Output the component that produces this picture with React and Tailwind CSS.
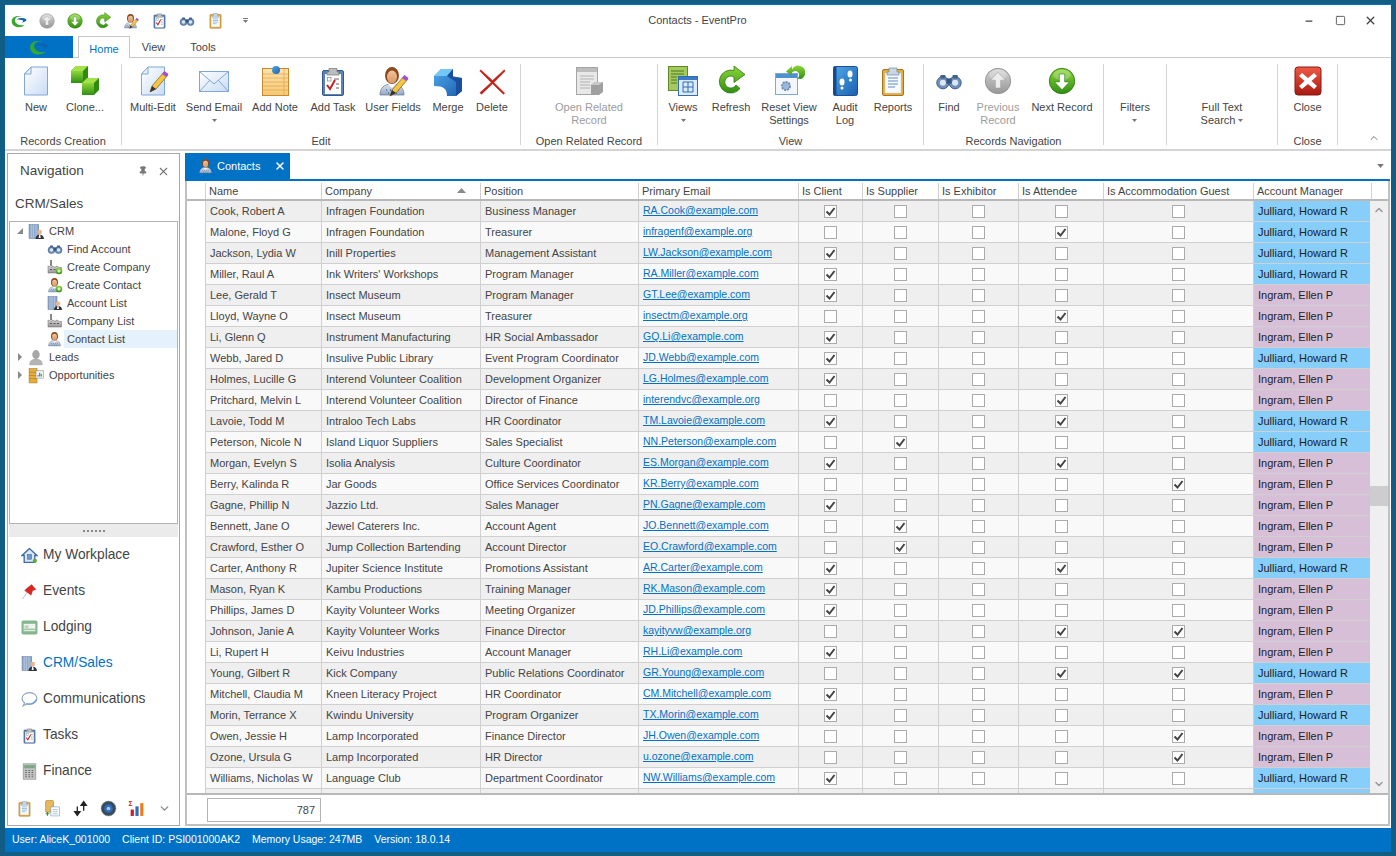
import React from 'react';
import { ChevronDown, ChevronUp, Pin, X, Minus, Square } from 'lucide-react';

const FONT = 'font-["Liberation_Sans",sans-serif]';

// name, company, position, email, flags (C S E A G), manager J/I
const contacts = [
  ['Cook, Robert A', 'Infragen Foundation', 'Business Manager', 'RA.Cook@example.com', 'C', 'J'],
  ['Malone, Floyd G', 'Infragen Foundation', 'Treasurer', 'infragenf@example.org', 'A', 'J'],
  ['Jackson, Lydia W', 'Inill Properties', 'Management Assistant', 'LW.Jackson@example.com', 'C', 'J'],
  ['Miller, Raul A', 'Ink Writers\' Workshops', 'Program Manager', 'RA.Miller@example.com', 'C', 'J'],
  ['Lee, Gerald T', 'Insect Museum', 'Program Manager', 'GT.Lee@example.com', 'C', 'I'],
  ['Lloyd, Wayne O', 'Insect Museum', 'Treasurer', 'insectm@example.org', 'A', 'I'],
  ['Li, Glenn Q', 'Instrument Manufacturing', 'HR Social Ambassador', 'GQ.Li@example.com', 'C', 'I'],
  ['Webb, Jared D', 'Insulive Public Library', 'Event Program Coordinator', 'JD.Webb@example.com', 'C', 'J'],
  ['Holmes, Lucille G', 'Interend Volunteer Coalition', 'Development Organizer', 'LG.Holmes@example.com', 'C', 'I'],
  ['Pritchard, Melvin L', 'Interend Volunteer Coalition', 'Director of Finance', 'interendvc@example.org', 'A', 'I'],
  ['Lavoie, Todd M', 'Intraloo Tech Labs', 'HR Coordinator', 'TM.Lavoie@example.com', 'CA', 'J'],
  ['Peterson, Nicole N', 'Island Liquor Suppliers', 'Sales Specialist', 'NN.Peterson@example.com', 'S', 'J'],
  ['Morgan, Evelyn S', 'Isolia Analysis', 'Culture Coordinator', 'ES.Morgan@example.com', 'CA', 'I'],
  ['Berry, Kalinda R', 'Jar Goods', 'Office Services Coordinator', 'KR.Berry@example.com', 'G', 'I'],
  ['Gagne, Phillip N', 'Jazzio Ltd.', 'Sales Manager', 'PN.Gagne@example.com', 'C', 'I'],
  ['Bennett, Jane O', 'Jewel Caterers Inc.', 'Account Agent', 'JO.Bennett@example.com', 'S', 'I'],
  ['Crawford, Esther O', 'Jump Collection Bartending', 'Account Director', 'EO.Crawford@example.com', 'S', 'I'],
  ['Carter, Anthony R', 'Jupiter Science Institute', 'Promotions Assistant', 'AR.Carter@example.com', 'CA', 'J'],
  ['Mason, Ryan K', 'Kambu Productions', 'Training Manager', 'RK.Mason@example.com', 'C', 'I'],
  ['Phillips, James D', 'Kayity Volunteer Works', 'Meeting Organizer', 'JD.Phillips@example.com', 'C', 'I'],
  ['Johnson, Janie A', 'Kayity Volunteer Works', 'Finance Director', 'kayityvw@example.org', 'AG', 'I'],
  ['Li, Rupert H', 'Keivu Industries', 'Account Manager', 'RH.Li@example.com', 'C', 'I'],
  ['Young, Gilbert R', 'Kick Company', 'Public Relations Coordinator', 'GR.Young@example.com', 'AG', 'J'],
  ['Mitchell, Claudia M', 'Kneen Literacy Project', 'HR Coordinator', 'CM.Mitchell@example.com', 'C', 'I'],
  ['Morin, Terrance X', 'Kwindu University', 'Program Organizer', 'TX.Morin@example.com', 'C', 'J'],
  ['Owen, Jessie H', 'Lamp Incorporated', 'Finance Director', 'JH.Owen@example.com', 'G', 'I'],
  ['Ozone, Ursula G', 'Lamp Incorporated', 'HR Director', 'u.ozone@example.com', 'G', 'I'],
  ['Williams, Nicholas W', 'Language Club', 'Department Coordinator', 'NW.Williams@example.com', 'C', 'J'],
  ['', '', '', '', '', 'J'],
];

/* ---------- icons ---------- */

const Svg = ({ size = 32, children }) => (
  <svg width={size} height={size} viewBox="0 0 32 32" className="shrink-0">{children}</svg>
);

const Defs = () => (
  <svg width="0" height="0" className="h-0 w-0 shrink-0">
    <defs>
      <linearGradient id="gPage" x1="0" y1="0" x2="1" y2="1"><stop offset="0" stopColor="#ffffff" /><stop offset="1" stopColor="#c9dcf4" /></linearGradient>
      <linearGradient id="gGreen" x1="0" y1="0" x2="0" y2="1"><stop offset="0" stopColor="#8ed63a" /><stop offset="1" stopColor="#2f8f12" /></linearGradient>
      <linearGradient id="gGray" x1="0" y1="0" x2="0" y2="1"><stop offset="0" stopColor="#d4d4d4" /><stop offset="1" stopColor="#979797" /></linearGradient>
      <linearGradient id="gBlue" x1="0" y1="0" x2="1" y2="1"><stop offset="0" stopColor="#4fa8ea" /><stop offset="1" stopColor="#1c5fb0" /></linearGradient>
      <linearGradient id="gRed" x1="0" y1="0" x2="0" y2="1"><stop offset="0" stopColor="#ee5a45" /><stop offset="1" stopColor="#a81a10" /></linearGradient>
      <linearGradient id="gNote" x1="0" y1="0" x2="0" y2="1"><stop offset="0" stopColor="#fce3ae" /><stop offset="1" stopColor="#f5c877" /></linearGradient>
      <linearGradient id="gSkin" x1="0" y1="0" x2="0" y2="1"><stop offset="0" stopColor="#f3c59b" /><stop offset="1" stopColor="#d89668" /></linearGradient>
      <linearGradient id="gShirt" x1="0" y1="0" x2="0" y2="1"><stop offset="0" stopColor="#dfe6f0" /><stop offset="1" stopColor="#93a6c2" /></linearGradient>
    </defs>
  </svg>
);

const Sheet = () => (
  <>
    <path d="M11 2h16.5v28H4.5V9z" fill="url(#gPage)" stroke="#7fa8d8" />
    <path d="M11 2v7H4.5z" fill="#e6effa" stroke="#7fa8d8" />
  </>
);

const Pencil = ({ dx = 0, dy = 0 }) => (
  <g transform={`translate(${dx} ${dy})`}>
    <path d="M12 28l2-6L26 8l4 3-12 14z" fill="#f5c542" stroke="#7a5a1c" strokeWidth=".7" />
    <path d="M24 10l2.5-3 4 3-2.5 3z" fill="#a84fd0" />
    <path d="M12 28l2-6 4 3z" fill="#333" />
  </g>
);

const Cube = ({ x, y }) => (
  <g transform={`translate(${x} ${y})`}>
    <path d="M0 5l5-5h12v12l-5 5H0z" fill="#2f8a10" />
    <path d="M0 5l5-5h12l-5 5z" fill="#a4e24a" />
    <path d="M0 5h12v12H0z" fill="url(#gGreen)" />
  </g>
);

const NewIcon = () => <Svg><Sheet /></Svg>;
const CloneIcon = () => <Svg><Cube x={2} y={1} /><Cube x={13} y={13} /></Svg>;
const MultiEditIcon = () => <Svg><Sheet /><Pencil dx={1} dy={-1} /></Svg>;

const MailIcon = () => (
  <Svg>
    <rect x="1.5" y="6.5" width="29" height="20" fill="url(#gPage)" stroke="#7fa8d8" />
    <path d="M2 7l14 12L30 7M2 26l10-11M30 26L20 15" fill="none" stroke="#7fa8d8" />
  </Svg>
);

const NoteIcon = () => (
  <Svg>
    <rect x="3.5" y="3.5" width="26" height="27" fill="url(#gNote)" stroke="#c98a2e" />
    <path d="M4 9h25M4 13h25M4 17h25M4 21h25M4 25h25" stroke="#e3a94f" strokeWidth=".8" />
    <path d="M25 4v26" stroke="#e3a94f" strokeWidth=".8" />
    <circle cx="17" cy="5" r="4" fill="url(#gBlue)" />
  </Svg>
);

const Clipboard = ({ size = 32 }) => (
  <Svg size={size}>
    <rect x="5.5" y="5.5" width="21" height="25" rx="1.5" fill="#5b84b8" stroke="#34598a" />
    <rect x="8" y="9" width="16" height="20" fill="#fdfdfd" />
    <path d="M12 7V3.500h8V7h2v3H10V7z" fill="#bdbdbd" stroke="#777" strokeWidth=".7" />
    <path d="M10 20l3 4 5-9" fill="none" stroke="#c81f1f" strokeWidth="2" />
    <path d="M17 14h5M19 19h3M19 23h3" stroke="#666" />
    <rect x="10.5" y="12.5" width="3.5" height="3.5" fill="none" stroke="#888" strokeWidth=".7" />
  </Svg>
);

const Person = ({ size = 32, pencil, hair = '#8a4a1e', plus, gray }) => (
  <Svg size={size}>
    <path d="M3 30c0-7 4-11 12-11s12 4 12 11z" fill={gray ? '#b4b4b4' : 'url(#gShirt)'} stroke={gray ? '#a0a0a0' : '#5d7290'} strokeWidth=".7" />
    {!gray && <path d="M11 19l4 4 4-4z" fill="#fff" />}
    {!gray && <path d="M9 25h1M13 25h1M17 25h1M21 25h1M11 28h1M15 28h1M19 28h1" stroke="#4a6a9a" strokeWidth="1.5" />}
    <ellipse cx="15" cy="10.5" rx="7" ry="8.5" fill={gray ? '#a8a8a8' : hair} />
    {!gray && <ellipse cx="15" cy="12" rx="5" ry="6.500" fill="url(#gSkin)" />}
    {pencil && <Pencil dx={1} dy={3} />}
    {plus && (
      <g>
        <circle cx="24" cy="24" r="6.5" fill="url(#gGreen)" />
        <path d="M24 20.500v7M20.500 24h7" stroke="#fff" strokeWidth="2" />
      </g>
    )}
  </Svg>
);

const MergeIcon = () => (
  <Svg>
    <path d="M2 11l7-7h12l-1 7 10 2v13l-6 5h-9c0-7-3-10-13-10z" fill="url(#gBlue)" />
    <path d="M2 11l7-7h12l-6 7z" fill="#74c6f4" />
    <path d="M21 4v8l9 1v13l-6 5V17l-9-6z" fill="#1b4f9e" />
  </Svg>
);

const DeleteIcon = () => (
  <Svg size={29}>
    <path d="M3 3l13 12L29 3l1 1.500-12.500 12.500L29.500 29 28 30 16 18.500 4 30l-2-1.500L14.500 17 2 4.500z" fill="#c8231a" stroke="#a81a10" strokeWidth=".5" />
  </Svg>
);

const OpenRelatedIcon = () => (
  <Svg>
    <rect x="3.5" y="2.5" width="21" height="27" fill="#e8e8e8" stroke="#a5a5a5" />
    <rect x="4" y="3" width="20" height="4" fill="#bcbcbc" />
    <path d="M7 11h14M7 14h14M7 17h10M7 20h10M7 23h10" stroke="#b2b2b2" />
    <path d="M18 20l4-3h8v10l-4 3h-8z" fill="#a0a0a0" />
    <path d="M18 20l4-3h8l-4 3z" fill="#c8c8c8" />
  </Svg>
);

const ViewsIcon = () => (
  <Svg>
    <rect x="1.5" y="1.5" width="19" height="24" fill="#a4c95e" stroke="#5f8a25" />
    <path d="M4 6h13M4 9h13M4 12h6M4 15h6M4 18h6" stroke="#4d7a1a" />
    <rect x="11.5" y="11.5" width="19" height="19" fill="#dceafa" stroke="#2f6cb4" />
    <rect x="12" y="12" width="18" height="3" fill="#3d7cc4" />
    <path d="M16 17h10v10H16zM21 17v10M16 22h10" fill="none" stroke="#2f6cb4" />
  </Svg>
);

const RefreshIcon = ({ size = 32 }) => (
  <Svg size={size}>
    <path d="M25 23.500A11.500 11.500 0 1 1 19 5.500V1l11 8.500-11 8v-5.500a6 6 0 1 0 2 8z" fill="url(#gGreen)" stroke="#2d7a10" strokeWidth=".8" />
  </Svg>
);

const ResetViewIcon = () => (
  <Svg>
    <rect x="2.5" y="8.5" width="22" height="21" fill="#f3f7fd" stroke="#7fa8d8" />
    <rect x="3" y="9" width="21" height="4" fill="#4f8fd4" />
    <circle cx="13" cy="21" r="4" fill="#9db8d8" stroke="#6f8fb4" strokeWidth="2" strokeDasharray="2 1" />
    <path d="M28 14A7 7 0 1 0 19 4.500V1l-6 5.500 6 4.500V7.500a4 4 0 1 1 5 6z" fill="url(#gGreen)" />
  </Svg>
);

const AuditIcon = () => (
  <Svg>
    <rect x="4.5" y="1.5" width="24" height="29" rx="2" fill="url(#gBlue)" stroke="#1d4f94" />
    <rect x="4.5" y="1.5" width="3" height="29" fill="#164a8e" />
    <ellipse cx="13" cy="17" rx="2.5" ry="3.500" fill="#fff" />
    <ellipse cx="13" cy="23" rx="1.5" ry="1.500" fill="#fff" />
    <ellipse cx="21" cy="9" rx="2.5" ry="3.500" fill="#fff" />
    <ellipse cx="21.500" cy="15" rx="1.500" ry="1.500" fill="#fff" />
  </Svg>
);

const ReportIcon = ({ size = 32 }) => (
  <Svg size={size}>
    <rect x="5.5" y="4.5" width="21" height="26" rx="1.5" fill="#e5ae3c" stroke="#a5761c" />
    <rect x="8" y="8" width="16" height="20" fill="#f7fbff" stroke="#c3d1e2" strokeWidth=".5" />
    <path d="M12 7V3h8v4h2v3H10V7z" fill="#c8d6e6" stroke="#70879e" strokeWidth=".7" />
    <path d="M11 13h10M11 16h10M11 19h10M11 22h7" stroke="#5d8fc4" />
  </Svg>
);

const Binoculars = ({ size = 32 }) => (
  <Svg size={size}>
    <circle cx="9" cy="18" r="7" fill="#6d8fb8" stroke="#35557e" />
    <circle cx="23" cy="18" r="7" fill="#6d8fb8" stroke="#35557e" />
    <circle cx="9" cy="18" r="3.500" fill="#dbe7f4" />
    <circle cx="23" cy="18" r="3.500" fill="#dbe7f4" />
    <rect x="13" y="13" width="6" height="6" fill="#35557e" />
    <rect x="6" y="9" width="6" height="4" rx="1" fill="#43618a" />
    <rect x="20" y="9" width="6" height="4" rx="1" fill="#43618a" />
  </Svg>
);

const CircleArrow = ({ size = 32, up, green }) => (
  <Svg size={size}>
    <circle cx="16" cy="16" r="14.5" fill={green ? 'url(#gGreen)' : 'url(#gGray)'} stroke={green ? '#2d7a10' : '#8e8e8e'} />
    <ellipse cx="16" cy="9" rx="10" ry="6" fill="#fff" opacity=".25" />
    <path
      d={up ? 'M16 6l8.500 9H19v9h-6v-9H7.500z' : 'M16 26l8.500-9H19V8h-6v9H7.500z'}
      fill={green ? '#fff' : '#ededed'}
      stroke={green ? '#1f6a0a' : '#9a9a9a'}
      strokeWidth=".6"
    />
  </Svg>
);

const CloseIcon = () => (
  <Svg>
    <rect x="3" y="2" width="26" height="28" rx="3" fill="url(#gRed)" stroke="#8a1810" />
    <path d="M10 8l6 5 6-5 3 3-5.500 5 5.500 5-3 3-6-5-6 5-3-3 5.500-5L7 11z" fill="#fff" />
  </Svg>
);

const Logo = ({ size = 32 }) => (
  <Svg size={size}>
    <path d="M3 17C3 8 13 6 21 8c-9-1-13 3-12 8 1 5 7 9 17 7-6 6-22 6-23-6z" fill="#35a92e" />
    <path d="M12 13c5-3 12-3 17 0 1 3-3 5-8 6 3-2 3-5-1-5-3 0-5 0-8-1z" fill="#0f62ae" />
  </Svg>
);

const Building = ({ size = 16 }) => (
  <Svg size={size}>
    <rect x="2" y="3" width="18" height="26" fill="#8fa9cc" stroke="#55729a" />
    <path d="M6 3v26M10 3v26M15 3v26" stroke="#d4e0ef" />
    <circle cx="22" cy="17" r="4.500" fill="#e8b88e" />
    <path d="M14 30c0-5 3-8 8-8s8 3 8 8z" fill="#333" />
    <path d="M21 22h2l1 6h-4z" fill="#fff" />
  </Svg>
);

const Factory = ({ size = 16, plus }) => (
  <Svg size={size}>
    <rect x="6" y="2" width="4" height="12" fill="#888" />
    <path d="M2 14l8 3v-3l8 3v-3l8 3h3v11H2z" fill="url(#gGray)" stroke="#666" />
    <path d="M6 21h4M13 21h4M20 21h4" stroke="#555" strokeWidth="2" />
    {plus && (
      <g>
        <circle cx="24" cy="24" r="6.5" fill="url(#gGreen)" />
        <path d="M24 20.500v7M20.500 24h7" stroke="#fff" strokeWidth="2" />
      </g>
    )}
  </Svg>
);

const Coins = ({ size = 16 }) => (
  <Svg size={size}>
    <rect x="2" y="3" width="15" height="27" fill="#e5ae3c" stroke="#a5761c" />
    <path d="M2 10h15M2 16h15M2 22h15" stroke="#a5761c" />
    <rect x="15" y="7" width="14" height="14" fill="#f0f0f0" stroke="#8a8a8a" />
    <path d="M19 18v-3M22 18v-7M25 18v-5" stroke="#5d7290" strokeWidth="2" />
  </Svg>
);

const HouseIcon = () => (
  <Svg size={17}>
    <path d="M16 3L2 16h4v13h20V16h4z" fill="#dbe7f6" stroke="#3f6aa5" strokeWidth="2.5" />
    <rect x="12" y="14" width="8" height="9" fill="#6f98ca" stroke="#3f6aa5" />
    <circle cx="26" cy="26" r="4" fill="#58b030" />
  </Svg>
);

const PinIcon = () => (
  <Svg size={17}>
    <path d="M3 30l9-13" stroke="#c8c8c8" strokeWidth="2" />
    <path d="M11 10l9-7 8 9-6 2-3 9-12-9z" fill="#dc2626" stroke="#a31515" strokeWidth=".7" />
  </Svg>
);

const LodgingIcon = () => (
  <Svg size={17}>
    <rect x="1" y="3" width="30" height="26" rx="3" fill="#83b58f" />
    <rect x="5" y="9" width="22" height="14" fill="#eef4ee" />
    <path d="M7 12h7v5H7z" fill="#b7d2bc" />
    <path d="M5 18h22v3H5z" fill="#a3c6aa" />
  </Svg>
);

const BubbleIcon = () => (
  <Svg size={17}>
    <path d="M16 3c8 0 14 5 14 11s-6 11-14 11c-2 0-3 0-5-1l-7 4 3-6C3 20 2 17 2 14 2 8 8 3 16 3z" fill="#fff" stroke="#8fa3b8" strokeWidth="2" />
    <path d="M9 24c8 2 17-1 20-8" fill="none" stroke="#5d9bd5" strokeWidth="2" />
  </Svg>
);

const CalcIcon = () => (
  <Svg size={17}>
    <rect x="4" y="1.5" width="24" height="29" fill="#c4c4c4" stroke="#7f7f7f" />
    <rect x="6" y="4" width="20" height="6" fill="#7aa882" />
    <path d="M8 14h3M14 14h3M20 14h3M8 18h3M14 18h3M20 18h3M8 22h3M14 22h3M20 22h3M8 26h3M14 26h3M20 26h3" stroke="#666" strokeWidth="2" />
  </Svg>
);

const CopyDocs = () => (
  <Svg size={17}>
    <rect x="3" y="1" width="15" height="22" rx="2" fill="#e5b85c" stroke="#a5761c" />
    <rect x="13" y="13" width="16" height="17" fill="#fff" stroke="#5d8fc4" />
    <path d="M16 18h10M16 22h10M16 26h10" stroke="#5d8fc4" />
    <path d="M3 26h7M6.500 22.500v7" stroke="#2f9a12" strokeWidth="2" />
  </Svg>
);

const SortArrows = () => (
  <Svg size={17}>
    <path d="M10 12v16M5 22l5 7 5-7z" stroke="#222" strokeWidth="2.5" fill="#222" />
    <path d="M22 20V4M17 10l5-7 5 7z" stroke="#222" strokeWidth="2.5" fill="#222" />
  </Svg>
);

const GlobeBtn = () => (
  <Svg size={17}>
    <circle cx="16" cy="16" r="14" fill="#3c4a58" stroke="#8a98a8" />
    <circle cx="16" cy="16" r="8" fill="#2d6cc0" />
    <circle cx="16" cy="16" r="3.5" fill="#a8c6ea" />
  </Svg>
);

const SigmaChart = () => (
  <Svg size={17}>
    <text x="1" y="12" fontSize="13" fontWeight="700" fill="#c81f1f" fontFamily="Liberation Sans">Σ</text>
    <rect x="5" y="18" width="6" height="12" fill="#c81f1f" />
    <rect x="14" y="12" width="6" height="18" fill="#2d6cc0" />
    <rect x="23" y="6" width="6" height="24" fill="#ef7d16" />
  </Svg>
);

const Caret = ({ className = '' }) => (
  <svg width="5" height="3" viewBox="0 0 5 3" className={className}><path d="M0 0h5L2.500 3z" fill="#777" /></svg>
);

const ArrowOpen = () => (
  <svg width="6" height="6" viewBox="0 0 6 6" className="ml-[7px]"><path d="M6 0v6H0z" fill="#888" /></svg>
);

const ArrowClosed = () => (
  <svg width="4" height="8" viewBox="0 0 4 8" className="ml-[8px]"><path d="M0 0l4 4-4 4z" fill="#888" /></svg>
);

/* ---------- ribbon ---------- */

const RibbonButton = ({ icon, label, width, disabled, caret }) => (
  <div className={`flex flex-col items-center ${width} ${disabled ? 'text-[#9c9c9c]' : 'text-[#444]'}`}>
    <div className="flex h-[34px] items-center justify-center">{icon}</div>
    <div className="mt-[3px] text-center text-[11px] leading-[13px] whitespace-pre">{label}</div>
    {caret && <Caret className="mt-[5px]" />}
  </div>
);

const RibbonGroup = ({ label, width, pad = 'pl-0', children }) => (
  <div className={`flex h-[81px] shrink-0 flex-col border-r border-[#d4d4d4] ${width}`}>
    <div className={`flex flex-1 ${pad}`}>{children}</div>
    <div className="h-[10px] text-center text-[11px] leading-[13px] text-[#444]">{label}</div>
  </div>
);

const Ribbon = () => (
  <div className="flex h-[93px] shrink-0 items-start border-b-2 border-[#d4d4d4] pt-[6px]">
    <RibbonGroup label="Records Creation" width="w-[117px]" pad="pl-[8px]">
      <RibbonButton width="w-[46px]" icon={<NewIcon />} label="New" />
      <RibbonButton width="w-[52px]" icon={<CloneIcon />} label="Clone..." />
    </RibbonGroup>
    <RibbonGroup label="Edit" width="w-[399px]" pad="pl-[5px]">
      <RibbonButton width="w-[52px]" icon={<MultiEditIcon />} label="Multi-Edit" />
      <RibbonButton width="w-[70px]" icon={<MailIcon />} label="Send Email" caret />
      <RibbonButton width="w-[52px]" icon={<NoteIcon />} label="Add Note" />
      <RibbonButton width="w-[64px]" icon={<Clipboard />} label="Add Task" />
      <RibbonButton width="w-[56px]" icon={<Person pencil />} label="User Fields" />
      <RibbonButton width="w-[54px]" icon={<MergeIcon />} label="Merge" />
      <RibbonButton width="w-[34px]" icon={<DeleteIcon />} label="Delete" />
    </RibbonGroup>
    <RibbonGroup label="Open Related Record" width="w-[137px]" pad="justify-center">
      <RibbonButton disabled width="w-[90px]" icon={<OpenRelatedIcon />} label={'Open Related\nRecord'} />
    </RibbonGroup>
    <RibbonGroup label="View" width="w-[266px]" pad="pl-[2px]">
      <RibbonButton width="w-[46px]" icon={<ViewsIcon />} label="Views" caret />
      <RibbonButton width="w-[50px]" icon={<RefreshIcon />} label="Refresh" />
      <RibbonButton width="w-[66px]" icon={<ResetViewIcon />} label={'Reset View\nSettings'} />
      <RibbonButton width="w-[46px]" icon={<AuditIcon />} label={'Audit\nLog'} />
      <RibbonButton width="w-[50px]" icon={<ReportIcon />} label="Reports" />
    </RibbonGroup>
    <RibbonGroup label="Records Navigation" width="w-[180px]" pad="pl-[2px]">
      <RibbonButton width="w-[46px]" icon={<Binoculars size={28} />} label="Find" />
      <RibbonButton disabled width="w-[52px]" icon={<CircleArrow up size={28} />} label={'Previous\nRecord'} />
      <RibbonButton width="w-[76px]" icon={<CircleArrow green size={28} />} label="Next Record" />
    </RibbonGroup>
    <RibbonGroup label="" width="w-[63px]" pad="justify-center">
      <div className="flex flex-col items-center pt-[37px] text-[11px] leading-[13px] text-[#444]">
        Filters
        <Caret className="mt-[5px]" />
      </div>
    </RibbonGroup>
    <RibbonGroup label="" width="w-[111px]" pad="justify-center">
      <div className="flex flex-col items-center pt-[37px] text-[11px] leading-[13px] text-[#444]">
        Full Text
        <div className="flex items-center gap-[3px]">Search<Caret /></div>
      </div>
    </RibbonGroup>
    <RibbonGroup label="Close" width="w-[60px]" pad="justify-center">
      <RibbonButton width="w-[50px]" icon={<CloseIcon />} label="Close" />
    </RibbonGroup>
    <div className="flex h-[80px] flex-1 items-end justify-end pr-[11px]">
      <ChevronUp size={12} strokeWidth={2} className="text-[#777]" />
    </div>
  </div>
);

const TitleBar = () => (
  <div className="flex h-[31px] shrink-0 items-center">
    <div className="flex w-[256px] shrink-0 items-center">
      <div className="flex w-[28px] justify-center"><Logo size={18} /></div>
      <div className="flex w-[28px] justify-center"><CircleArrow up size={16} /></div>
      <div className="flex w-[28px] justify-center"><CircleArrow green size={16} /></div>
      <div className="flex w-[28px] justify-center"><RefreshIcon size={18} /></div>
      <div className="flex w-[28px] justify-center"><Person size={16} pencil /></div>
      <div className="flex w-[28px] justify-center"><Clipboard size={17} /></div>
      <div className="flex w-[28px] justify-center"><Binoculars size={16} /></div>
      <div className="flex w-[28px] justify-center"><ReportIcon size={17} /></div>
      <div className="flex w-[32px] flex-col items-center gap-[1px]">
        <div className="h-px w-[5px] bg-[#777]" />
        <Caret />
      </div>
    </div>
    <div className="flex-1 pr-[160px] text-center text-[11px] text-[#444]">Contacts - EventPro</div>
    <div className="flex w-[97px] items-center text-[#444]">
      <div className="flex w-[30px] justify-center"><Minus size={10} strokeWidth={3} /></div>
      <div className="flex w-[32px] justify-center"><Square size={11} strokeWidth={1.8} /></div>
      <div className="flex w-[28px] justify-center"><X size={13} strokeWidth={2.5} /></div>
    </div>
  </div>
);

const TabStrip = () => (
  <div className="flex h-[22px] shrink-0 items-end border-b border-[#c8c8c8] text-[11px]">
    <div className="mb-[-1px] flex h-[22px] w-[68px] items-center justify-center bg-[#0072c6]">
      <Logo size={22} />
    </div>
    <div className="mb-[-1px] ml-[5px] flex h-[22px] w-[52px] items-center justify-center border border-b-0 border-[#c8c8c8] bg-white pt-[3px] text-[#0072c6]">Home</div>
    <div className="flex h-[22px] w-[47px] items-center justify-center pt-[3px] text-[#444]">View</div>
    <div className="flex h-[22px] w-[52px] items-center justify-center pt-[3px] text-[#444]">Tools</div>
  </div>
);

/* ---------- navigation ---------- */

const TreeRow = ({ icon, label, selected }) => (
  <div className="flex h-[18px] items-center pl-[36px]">
    <div className="flex w-[18px] shrink-0 justify-center">{icon}</div>
    <div className={`flex h-[18px] flex-1 items-center pl-[3px] ${selected ? 'bg-[#e5f1fb]' : ''}`}>{label}</div>
  </div>
);

const TreeRoot = ({ arrow, icon, label }) => (
  <div className="flex h-[18px] items-center">
    <div className="flex w-[18px] shrink-0 items-center">{arrow}</div>
    {icon}
    <span className="ml-[4px]">{label}</span>
  </div>
);

const NavItem = ({ icon, label, active }) => (
  <div className={`flex h-[36px] items-center pl-[12px] text-[13.75px] ${active ? 'text-[#0072c6]' : 'text-[#444]'}`}>
    <div className="flex w-[16px] justify-center">{icon}</div>
    <span className="ml-[6px]">{label}</span>
  </div>
);

const NavPanel = () => (
  <div className="flex h-full w-[173px] shrink-0 flex-col border border-[#a8a8a8] bg-white px-[1px]">
    <div className="flex h-[34px] shrink-0 items-center pr-[8px] pl-[11px] text-[13.5px] text-[#444]">
      <span className="flex-1">Navigation</span>
      <Pin size={10} className="mr-[9px] text-[#777]" fill="#777" />
      <X size={13} strokeWidth={2} className="text-[#777]" />
    </div>
    <div className="h-[33px] shrink-0 pt-[6px] pl-[6px] text-[13.5px] leading-[20px] text-[#444]">CRM/Sales</div>
    <div className="h-[303px] shrink-0 border border-[#b4b4b4] text-[11px] text-[#444]">
      <TreeRoot arrow={<ArrowOpen />} icon={<Building size={17} />} label="CRM" />
      <TreeRow icon={<Binoculars size={16} />} label="Find Account" />
      <TreeRow icon={<Factory plus />} label="Create Company" />
      <TreeRow icon={<Person size={16} plus />} label="Create Contact" />
      <TreeRow icon={<Building size={16} />} label="Account List" />
      <TreeRow icon={<Factory />} label="Company List" />
      <TreeRow icon={<Person size={16} />} label="Contact List" selected />
      <TreeRoot arrow={<ArrowClosed />} icon={<Person size={17} gray />} label="Leads" />
      <TreeRoot arrow={<ArrowClosed />} icon={<Coins size={17} />} label="Opportunities" />
    </div>
    <div className="flex h-[13px] shrink-0 items-center justify-center bg-[#ebebeb]">
      <div className="h-[2px] w-[22px] bg-[repeating-linear-gradient(90deg,#888_0,#888_2px,transparent_2px,transparent_4px)]" />
    </div>
    <div className="flex-1">
      <NavItem icon={<HouseIcon />} label="My Workplace" />
      <NavItem icon={<PinIcon />} label="Events" />
      <NavItem icon={<LodgingIcon />} label="Lodging" />
      <NavItem icon={<Building size={17} />} label="CRM/Sales" active />
      <NavItem icon={<BubbleIcon />} label="Communications" />
      <NavItem icon={<Clipboard size={17} />} label="Tasks" />
      <NavItem icon={<CalcIcon />} label="Finance" />
    </div>
    <div className="flex h-[34px] shrink-0 items-center pl-[2px]">
      <div className="flex w-[28px] justify-center"><ReportIcon size={17} /></div>
      <div className="flex w-[28px] justify-center"><CopyDocs /></div>
      <div className="flex w-[28px] justify-center"><SortArrows /></div>
      <div className="flex w-[28px] justify-center"><GlobeBtn /></div>
      <div className="flex w-[28px] justify-center"><SigmaChart /></div>
      <div className="flex w-[28px] justify-center"><ChevronDown size={13} strokeWidth={2.5} className="text-[#888]" /></div>
    </div>
  </div>
);

/* ---------- grid ---------- */

const columns = ['w-[116px]', 'w-[159px]', 'w-[158px]', 'w-[160px]', 'w-[64px]', 'w-[76px]', 'w-[80px]', 'w-[85px]', 'w-[150px]', 'w-[118px]'];
const headers = ['Name', 'Company', 'Position', 'Primary Email', 'Is Client', 'Is Supplier', 'Is Exhibitor', 'Is Attendee', 'Is Accommodation Guest', 'Account Manager'];

const CheckCell = ({ width, checked }) => (
  <div className={`flex h-full shrink-0 items-center justify-center border-r border-[#d0d0d0] ${width}`}>
    <div className="flex h-[13px] w-[13px] items-center justify-center border border-[#ababab] bg-white">
      {checked && (
        <svg width="11" height="11" viewBox="0 0 11 11"><path d="M1.5 5.500l3 3 5-6.500" fill="none" stroke="#444" strokeWidth="2" /></svg>
      )}
    </div>
  </div>
);

const TextCell = ({ width, children }) => (
  <div className={`flex h-full shrink-0 items-center overflow-hidden border-r border-[#d0d0d0] pl-[4px] whitespace-nowrap ${width}`}>{children}</div>
);

const GridRow = ({ row, idx }) => {
  const [name, company, position, email, flags, manager] = row;
  return (
    <div className={`flex h-[21px] shrink-0 border-b border-[#d0d0d0] ${idx % 2 === 0 ? 'bg-[#efefef]' : 'bg-[#f9f9f9]'}`}>
      <TextCell width={columns[0]}>{name}</TextCell>
      <TextCell width={columns[1]}>{company}</TextCell>
      <TextCell width={columns[2]}>{position}</TextCell>
      <TextCell width={columns[3]}><span className="text-[10.5px] text-[#0072c6] underline">{email}</span></TextCell>
      <CheckCell width={columns[4]} checked={flags.includes('C')} />
      <CheckCell width={columns[5]} checked={flags.includes('S')} />
      <CheckCell width={columns[6]} checked={flags.includes('E')} />
      <CheckCell width={columns[7]} checked={flags.includes('A')} />
      <CheckCell width={columns[8]} checked={flags.includes('G')} />
      <div className={`flex h-full w-[118px] shrink-0 items-center pl-[4px] text-[#222] ${manager === 'J' ? 'bg-[#87cefa]' : 'bg-[#d8bfd8]'}`}>
        {name && (manager === 'J' ? 'Julliard, Howard R' : 'Ingram, Ellen P')}
      </div>
    </div>
  );
};

const Grid = () => (
  <div className="flex min-h-0 flex-1 flex-col text-[11px] text-[#444]">
    <div className="flex h-[20px] shrink-0 border-b-2 border-[#b8b8b8] pt-[2px]">
      <div className="w-[19px] shrink-0 border-r border-[#d0d0d0]" />
      {headers.map((h, i) => (
        <div key={h} className={`relative flex h-full shrink-0 items-center border-r border-[#d0d0d0] pl-[3px] ${columns[i]}`}>
          {h}
          {h === 'Company' && <svg width="9" height="5" viewBox="0 0 9 5" className="absolute top-[5px] right-[14px]"><path d="M4.5 0L9 5H0z" fill="#8a8a8a" /></svg>}
        </div>
      ))}
      <div className="w-[18px] shrink-0" />
    </div>
    <div className="flex min-h-0 flex-1">
      <div className="w-[19px] shrink-0 border-r border-[#d0d0d0]" />
      <div className="min-h-0 flex-1 overflow-hidden">
        {contacts.map((row, idx) => <GridRow key={idx} row={row} idx={idx} />)}
      </div>
      <div className="flex w-[18px] shrink-0 flex-col items-center bg-[#efefef]">
        <ChevronUp size={12} strokeWidth={3} className="mt-[3px] text-[#999]" />
        <div className="flex-1" />
        <div className="h-[20px] w-full bg-[#cdcdcd]" />
        <div className="flex-[0_0_272px]" />
        <ChevronDown size={12} strokeWidth={3} className="mb-[3px] text-[#999]" />
      </div>
    </div>
    <div className="flex h-[31px] shrink-0 items-center border-t-2 border-[#b8b8b8] pl-[20px]">
      <div className="h-[24px] w-[114px] border border-[#b4b4b4] pr-[5px] text-right leading-[22px] text-[#444]">787</div>
    </div>
  </div>
);

const MainPanel = () => (
  <div className="flex h-full min-w-0 flex-1 flex-col">
    <div className="flex h-[28px] shrink-0 border-b-2 border-[#0072c6]">
      <div className="flex h-[26px] w-[105px] items-center bg-[#0072c6] pl-[13px] text-[11px] text-white">
        <Person size={16} />
        <span className="ml-[3px]">Contacts</span>
        <X size={12} strokeWidth={3} className="ml-[14px]" />
      </div>
      <div className="flex flex-1 items-center justify-end pr-[6px]"><Caret className="h-[4px] w-[7px]" /></div>
    </div>
    <div className="flex min-h-0 flex-1 flex-col border-2 border-t-0 border-[#c0c0c0]">
      <Grid />
    </div>
  </div>
);

export default function App() {
  return (
    <div className={`flex h-[856px] w-[1396px] flex-col overflow-hidden border-x-[5px] border-b-[4px] border-[#115d84] ${FONT}`}>
      <Defs />
      <div className="h-[5px] shrink-0 border-b border-[#0072c6] bg-[#115d84]" />
      <div className="flex min-h-0 flex-1 flex-col bg-white">
        <TitleBar />
        <TabStrip />
        <Ribbon />
        <div className="flex min-h-0 flex-1 gap-[5px] pt-[2px] pr-[1px] pb-[2px] pl-[2px]">
          <NavPanel />
          <MainPanel />
        </div>
      </div>
      <div className="flex h-[24px] shrink-0 items-center gap-[12px] bg-[#0072c6] pl-[7px] text-[10.5px] text-white">
        <span>User: AliceK_001000</span>
        <span>Client ID: PSI001000AK2</span>
        <span>Memory Usage: 247MB</span>
        <span>Version: 18.0.14</span>
      </div>
    </div>
  );
}
